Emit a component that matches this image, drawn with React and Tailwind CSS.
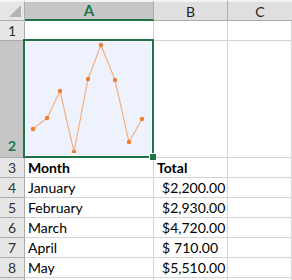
const font = { fontFamily: 'Lato, "Liberation Sans", sans-serif' }

const rows = [
  { n: 3, month: 'Month', total: 'Total', head: true },
  { n: 4, month: 'January', total: '2,200.00' },
  { n: 5, month: 'February', total: '2,930.00' },
  { n: 6, month: 'March', total: '4,720.00' },
  { n: 7, month: 'April', total: '710.00' },
  { n: 8, month: 'May', total: '5,510.00' },
]

const points = [
  [35, 130], [49, 119], [62, 92], [76, 153], [90, 80],
  [103, 46], [117, 81], [131, 143], [144, 120],
]

function Sparkline() {
  // chart box starts at page x=28, y=43
  const pts = points.map(([x, y]) => [x - 28, y - 43])
  return (
    <svg width="123" height="111" className="block">
      <polyline
        points={pts.map((p) => p.join(',')).join(' ')}
        fill="none"
        stroke="#f4b183"
        strokeWidth="1.2"
      />
      {pts.map(([x, y], i) => (
        <circle key={i} cx={x} cy={y} r="2.2" fill="#ed7d31" />
      ))}
    </svg>
  )
}

function RowHead({ children, selected }) {
  return (
    <div
      className={
        'flex items-center justify-center border-r border-b border-[#ababab] text-[14px] ' +
        (selected ? 'bg-[#c6c6c6] text-[#217346] font-bold items-end pb-[1px]' : 'bg-[#e6e6e6] text-[#333]')
      }
    >
      {children}
    </div>
  )
}

function Cell({ children, className = '' }) {
  return <div className={'border-r border-b border-[#d4d4d4] text-[14px] text-black flex items-center ' + className}>{children}</div>
}

export default function App() {
  return (
    <div className="w-[292px] h-[280px] overflow-hidden bg-white" style={font}>
      <div className="grid grid-cols-[25px_129px_74px_64px] grid-rows-[21px_20px_117px_repeat(7,20px)]">
        {/* header row */}
        <div className="relative bg-[#e6e6e6] border-r border-b border-[#ababab] border-t-2 border-t-[#f3f3f3]">
          <div className="absolute right-[3px] bottom-[3px] w-0 h-0 border-l-[12px] border-l-transparent border-b-[12px] border-b-[#b4b4b4]" />
        </div>
        <div className="flex items-center justify-center bg-[#c6c6c6] border-t-2 border-t-[#f3f3f3] border-r border-r-[#ababab] border-b-2 border-b-[#217346] text-[15px] font-bold text-[#217346]">
          A
        </div>
        <div className="flex items-center justify-center bg-[#dfdfdf] border-t-2 border-t-[#f3f3f3] border-r border-r-[#ababab] border-b border-b-[#ababab] text-[14px] text-[#222]">
          B
        </div>
        <div className="flex items-center justify-center bg-[#dfdfdf] border-t-2 border-t-[#f3f3f3] border-b border-b-[#ababab] text-[14px] text-[#222]">
          C
        </div>

        {/* row 1 */}
        <RowHead>1</RowHead>
        <Cell />
        <Cell />
        <Cell />

        {/* row 2 with chart */}
        <RowHead selected>2</RowHead>
        <div className="relative border-r border-b border-[#d4d4d4]">
          <div className="absolute left-[-2px] top-[-2px] right-[-1px] bottom-[-1px] border-2 border-[#217346] p-px bg-white">
            <div className="w-full h-full bg-[#eef2fc]">
              <Sparkline />
            </div>
          </div>
          <div className="absolute right-[-4px] bottom-[-4px] w-[6px] h-[6px] bg-[#217346] border border-white box-content" />
        </div>
        <Cell />
        <Cell />

        {rows.map((r) => (
          <Row key={r.n} r={r} />
        ))}

        <RowHead />
        <Cell />
        <Cell />
        <Cell />
      </div>
    </div>
  )
}

function Row({ r }) {
  return (
    <>
      <RowHead>{r.n}</RowHead>
      <Cell className={'pl-[3px] ' + (r.head ? 'font-bold' : '')}>{r.month}</Cell>
      {r.head ? (
        <Cell className="pl-[3px] font-bold">{r.total}</Cell>
      ) : (
        <Cell className="justify-between pl-[8px] pr-[9px]">
          <span>$</span>
          <span>{r.total}</span>
        </Cell>
      )}
      <Cell />
    </>
  )
}
